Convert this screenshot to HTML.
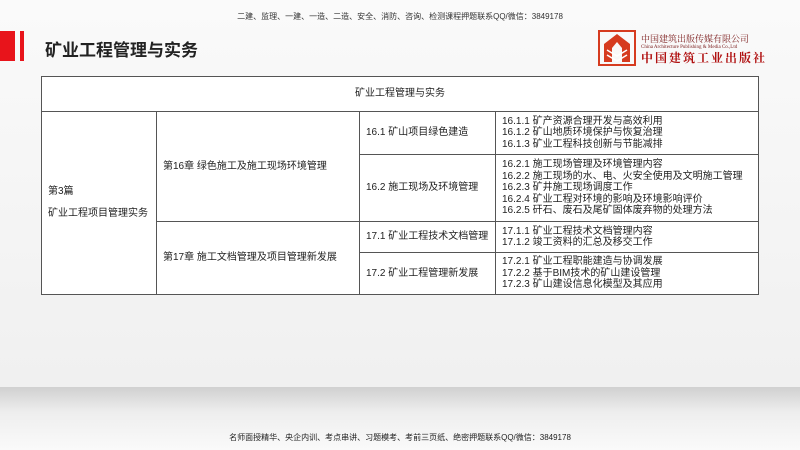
<!DOCTYPE html>
<html><head><meta charset="utf-8"><style>
*{margin:0;padding:0;box-sizing:border-box}
body{width:800px;height:450px;overflow:hidden;position:relative;background:#f2f2f2;font-family:"Liberation Sans","Noto Sans CJK SC",sans-serif;color:#222}
.bg{position:absolute;left:0;top:0;width:800px;height:387px;background:linear-gradient(#fafafa,#f0f0f0)}
.floor{position:absolute;left:0;top:387px;width:800px;height:63px;background:linear-gradient(#d0d0d0,#eeeeee 40%,#fafafa)}
.top{position:absolute;top:11px;left:0;width:800px;text-align:center;font-size:8px;color:#333}
.bar1{position:absolute;left:0;top:31px;width:15px;height:30px;background:#e8141b}
.bar2{position:absolute;left:20px;top:31px;width:4px;height:30px;background:#e8141b}
.title{position:absolute;left:45px;top:36px;font-size:17px;font-weight:bold;color:#222}
.logo{position:absolute;left:598px;top:30px}
.lt{position:absolute;left:641px;font-family:"Noto Serif CJK SC",serif;color:#7a1a1a;white-space:nowrap}
table{position:absolute;left:41px;top:76px;width:718px;border-collapse:collapse;background:#fff;font-size:10px}
td{border:1px solid #555;padding:0 6px;vertical-align:middle;line-height:11.5px}
.foot{position:absolute;top:432px;left:0;width:800px;text-align:center;font-size:8px;color:#222}
</style></head><body>
<div class="bg"></div><div class="floor"></div>
<div class="top">二建、监理、一建、一造、二造、安全、消防、咨询、检测课程押题联系QQ/微信：3849178</div>
<div class="bar1"></div><div class="bar2"></div>
<div class="title">矿业工程管理与实务</div>
<svg class="logo" width="38" height="36" viewBox="0 0 38 36"><rect x="1" y="1" width="36" height="34" fill="none" stroke="#d63b1f" stroke-width="2"/><path d="M19 4 L6 14 L6 32 L14 32 L14 18 L19 12 L24 18 L24 32 L32 32 L32 14Z" fill="#d63b1f"/><path d="M9 20 L19 26 L29 20 M9 25 L19 31 L29 25" stroke="#fff" stroke-width="1.5" fill="none"/></svg>
<div class="lt" style="top:33px;font-size:9px;line-height:11px">中国建筑出版传媒有限公司</div>
<div class="lt" style="top:45px;font-size:5px;line-height:6px;font-family:'Liberation Serif',serif">China Architecture Publishing &amp; Media Co.,Ltd</div>
<div class="lt" style="top:51px;font-size:12px;line-height:14px;font-weight:bold;color:#b01010;letter-spacing:2px">中国建筑工业出版社</div>
<table>
<tr style="height:35px"><td colspan="4" style="text-align:center">矿业工程管理与实务</td></tr>
<tr style="height:43px"><td rowspan="4" style="width:115px;line-height:22px">第3篇<br>矿业工程项目管理实务</td><td rowspan="2" style="width:203px">第16章 绿色施工及施工现场环境管理</td><td style="width:136px">16.1 矿山项目绿色建造</td><td>16.1.1 矿产资源合理开发与高效利用<br>16.1.2 矿山地质环境保护与恢复治理<br>16.1.3 矿业工程科技创新与节能减排</td></tr>
<tr style="height:67px"><td>16.2 施工现场及环境管理</td><td>16.2.1 施工现场管理及环境管理内容<br>16.2.2 施工现场的水、电、火安全使用及文明施工管理<br>16.2.3 矿井施工现场调度工作<br>16.2.4 矿业工程对环境的影响及环境影响评价<br>16.2.5 矸石、废石及尾矿固体废弃物的处理方法</td></tr>
<tr style="height:31px"><td rowspan="2">第17章 施工文档管理及项目管理新发展</td><td>17.1 矿业工程技术文档管理</td><td>17.1.1 矿业工程技术文档管理内容<br>17.1.2 竣工资料的汇总及移交工作</td></tr>
<tr style="height:42px"><td>17.2 矿业工程管理新发展</td><td>17.2.1 矿业工程职能建造与协调发展<br>17.2.2 基于BIM技术的矿山建设管理<br>17.2.3 矿山建设信息化模型及其应用</td></tr>
</table>
<div class="foot">名师面授精华、央企内训、考点串讲、习题模考、考前三页纸、绝密押题联系QQ/微信：3849178</div>
</body></html>
